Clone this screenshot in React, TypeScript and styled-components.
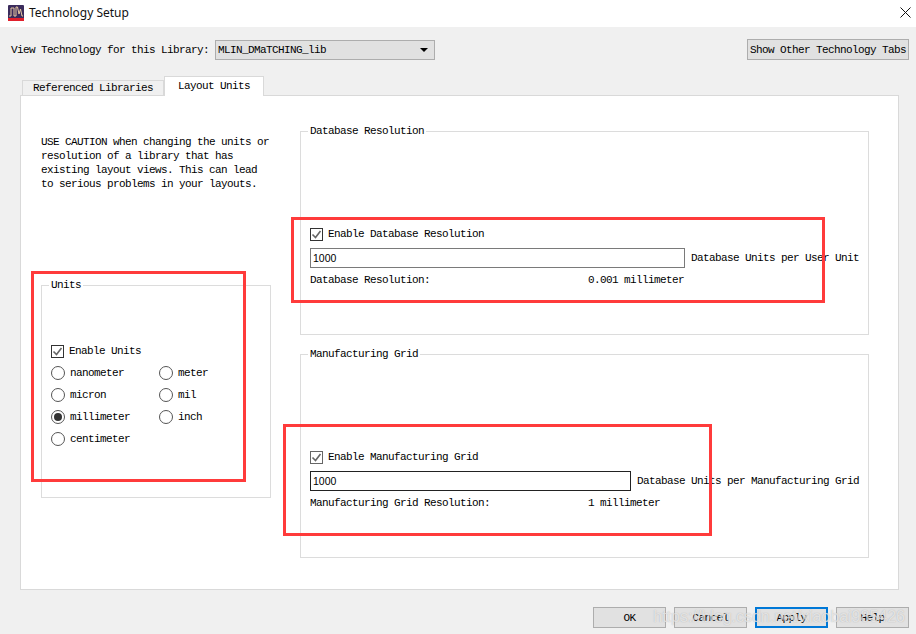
import * as React from "react";
import styled, {createGlobalStyle} from "styled-components";

const GlobalStyle = createGlobalStyle`
  html, body {
    margin: 0;
    padding: 0;
    background: #f0f0f0;
  }
  * {
    box-sizing: border-box;
  }
`;

const monoText = `
  font-family: "Liberation Mono", "DejaVu Sans Mono", monospace;
  font-size: 11px;
  letter-spacing: -0.6px;
  line-height: 14px;
  color: #000;
  white-space: pre;
`;

const AppIcon = () => (
    <svg width="16" height="16" viewBox="0 0 16 16">
        <rect width="16" height="16" rx="1" fill="#3b2c5c"/>
        <rect y="13" width="16" height="3" fill="#e0202c"/>
        <path d="M1 11H3V3H6V11H8V2H9.5L11 9L12.5 4L14 11H15" fill="none" stroke="#e8c9a0" strokeWidth="1"/>
    </svg>
);

const CloseIcon = () => (
    <svg width="11" height="11" viewBox="0 0 11 11">
        <path d="M0.5 0.5L10.5 10.5M10.5 0.5L0.5 10.5" stroke="#111" strokeWidth="1"/>
    </svg>
);

const CheckIcon = () => (
    <svg width="11" height="11" viewBox="0 0 11 11">
        <path d="M1.5 5.5L4.5 8.5L9.5 2" fill="none" stroke="#666" strokeWidth="1.6"/>
    </svg>
);

const CheckRow = ({label, dim}: { label: string; dim?: boolean }) => (
    <Row>
        <CheckBox $dim={dim}><CheckIcon/></CheckBox>
        <Label>{label}</Label>
    </Row>
);

const RadioOption = ({label, checked}: { label: string; checked?: boolean }) => (
    <RadioRow>
        <RadioDot $checked={checked}/>
        <Label>{label}</Label>
    </RadioRow>
);

const units = [
    {label: "nanometer"},
    {label: "meter"},
    {label: "micron"},
    {label: "mil"},
    {label: "millimeter", checked: true},
    {label: "inch"},
    {label: "centimeter"},
];

const App = () => {
    return (
        <Window>
            <GlobalStyle/>
            <TitleBar>
                <AppIcon/>
                <TitleText>Technology Setup</TitleText>
                <CloseSlot><CloseIcon/></CloseSlot>
            </TitleBar>
            <Toolbar>
                <Label>View Technology for this Library:</Label>
                <Select>
                    <Label>MLIN_DMaTCHING_lib</Label>
                    <SelectArrow/>
                </Select>
                <ToolButton>Show Other Technology Tabs</ToolButton>
            </Toolbar>
            <TabStrip>
                <Tab>Referenced Libraries</Tab>
                <Tab $active>Layout Units</Tab>
            </TabStrip>
            <Panel>
                <LeftColumn>
                    <Caution>{"USE CAUTION when changing the units or\nresolution of a library that has\nexisting layout views. This can lead\nto serious problems in your layouts."}</Caution>
                    <Group $height={219} $top={52} $gap={88}>
                        <GroupLegend>Units</GroupLegend>
                        <CheckRow label="Enable Units"/>
                        <RadioGrid>
                            {units.map((unit) => (
                                <RadioOption key={unit.label} label={unit.label} checked={unit.checked}/>
                            ))}
                        </RadioGrid>
                    </Group>
                </LeftColumn>
                <RightColumn>
                    <Group $height={210} $top={89}>
                        <GroupLegend>Database Resolution</GroupLegend>
                        <CheckRow label="Enable Database Resolution"/>
                        <InputRow>
                            <ValueInput>1000</ValueInput>
                            <Label>Database Units per User Unit</Label>
                        </InputRow>
                        <ResultRow>
                            <Label>Database Resolution:</Label>
                            <Label>0.001 millimeter</Label>
                        </ResultRow>
                    </Group>
                    <Group $height={210} $top={89}>
                        <GroupLegend>Manufacturing Grid</GroupLegend>
                        <CheckRow label="Enable Manufacturing Grid" dim/>
                        <InputRow>
                            <ValueInput $focused>1000</ValueInput>
                            <Label>Database Units per Manufacturing Grid</Label>
                        </InputRow>
                        <ResultRow>
                            <Label>Manufacturing Grid Resolution:</Label>
                            <Label>1 millimeter</Label>
                        </ResultRow>
                    </Group>
                </RightColumn>
            </Panel>
            <Footer>
                <FooterButton>OK</FooterButton>
                <FooterButton>Cancel</FooterButton>
                <FooterButton $primary>Apply</FooterButton>
                <FooterButton>Help</FooterButton>
            </Footer>
            <Highlight $x={31} $y={271} $w={215} $h={211}/>
            <Highlight $x={291} $y={217} $w={534} $h={86}/>
            <Highlight $x={283} $y={424} $w={429} $h={112}/>
            <Watermark>https://blog.csdn.net/xiaobai985426</Watermark>
        </Window>
    );
};

export default App;

const Window = styled.div`
  position: relative;
  width: 916px;
  height: 634px;
  overflow: hidden;
  display: flex;
  flex-direction: column;
  background: #f0f0f0;
`;

const TitleBar = styled.div`
  height: 27px;
  flex: none;
  display: flex;
  align-items: center;
  padding: 0 5px 2px 8px;
  background: #fff;
`;

const TitleText = styled.span`
  margin-left: 5px;
  font-family: "Noto Sans", "Open Sans", sans-serif;
  font-size: 12px;
  line-height: 16px;
  color: #111;
`;

const CloseSlot = styled.span`
  display: flex;
  margin-left: auto;
`;

const Toolbar = styled.div`
  height: 21px;
  flex: none;
  margin-top: 12px;
  padding: 0 7px 0 11px;
  display: flex;
  align-items: center;
`;

const Label = styled.span`
  ${monoText}
`;

const Select = styled.div`
  width: 220px;
  height: 20px;
  margin-left: 6px;
  padding: 0 6px 0 2px;
  display: flex;
  align-items: center;
  justify-content: space-between;
  background: #e1e1e1;
  border: 1px solid #adadad;
`;

const SelectArrow = styled.span`
  width: 0;
  height: 0;
  border-left: 4px solid transparent;
  border-right: 4px solid transparent;
  border-top: 4px solid #000;
`;

const ToolButton = styled.div`
  ${monoText}
  height: 21px;
  width: 162px;
  margin-left: auto;
  display: flex;
  align-items: center;
  justify-content: center;
  background: #e1e1e1;
  border: 1px solid #adadad;
`;

const TabStrip = styled.div`
  height: 20px;
  flex: none;
  margin: 16px 0 -1px;
  padding-left: 22px;
  display: flex;
  align-items: flex-end;
`;

const Tab = styled.div<{ $active?: boolean }>`
  ${monoText}
  position: relative;
  z-index: 1;
  height: ${(p) => (p.$active ? "20px" : "16px")};
  padding: ${(p) => (p.$active ? "2px 13px 0" : "0 10px")};
  margin-left: ${(p) => (p.$active ? "0" : "0")};
  background: ${(p) => (p.$active ? "#fff" : "#f0f0f0")};
  border: 1px solid #d9d9d9;
  border-bottom: ${(p) => (p.$active ? "none" : "1px solid #d9d9d9")};
`;

const Panel = styled.div`
  height: 495px;
  flex: none;
  margin: 0 17px 0 20px;
  padding: 29px 0 0 20px;
  display: grid;
  grid-template-columns: 230px 569px;
  column-gap: 29px;
  align-items: start;
  background: #fff;
  border: 1px solid #d9d9d9;
`;

const LeftColumn = styled.div`
  display: flex;
  flex-direction: column;
`;

const RightColumn = styled.div`
  display: flex;
  flex-direction: column;
  gap: 13px;
`;

const Caution = styled.div`
  ${monoText}
  margin-top: 10px;
`;

const Group = styled.fieldset<{ $height: number; $top: number; $gap?: number }>`
  margin: ${(p) => p.$gap ?? 0}px 0 0;
  min-width: 0;
  height: ${(p) => p.$height}px;
  padding: ${(p) => p.$top}px 9px 0;
  border: 1px solid #dcdcdc;
`;

const GroupLegend = styled.legend`
  ${monoText}
  line-height: 13px;
  margin-left: -2px;
  padding: 0 2px;
`;

const Row = styled.div`
  height: 14px;
  display: flex;
  align-items: center;
  gap: 5px;
`;

const CheckBox = styled.span<{ $dim?: boolean }>`
  width: 13px;
  height: 13px;
  flex: none;
  display: flex;
  align-items: center;
  justify-content: center;
  background: #fff;
  border: 1px solid ${(p) => (p.$dim ? "#666" : "#333")};
`;

const RadioGrid = styled.div`
  margin-top: 4px;
  display: grid;
  grid-template-columns: 108px 1fr;
  grid-auto-rows: 22px;
`;

const RadioRow = styled.div`
  display: flex;
  align-items: center;
  gap: 5px;
`;

const RadioDot = styled.span<{ $checked?: boolean }>`
  width: 14px;
  height: 14px;
  flex: none;
  display: flex;
  align-items: center;
  justify-content: center;
  border: 1px solid #555;
  border-radius: 50%;
  background: #fff;

  &::before {
    content: "";
    display: ${(p) => (p.$checked ? "block" : "none")};
    width: 8px;
    height: 8px;
    border-radius: 50%;
    background: #333;
  }
`;

const InputRow = styled.div`
  margin-top: 7px;
  display: flex;
  align-items: center;
  gap: 6px;
`;

const ValueInput = styled.div<{ $focused?: boolean }>`
  flex: 1;
  height: 20px;
  padding-left: 2px;
  font-family: "Liberation Sans", Arial, sans-serif;
  font-size: 10.5px;
  line-height: 18px;
  color: #000;
  background: #fff;
  border: 1px solid ${(p) => (p.$focused ? "#222" : "#7a7a7a")};
`;

const ResultRow = styled.div`
  margin-top: 5px;
  display: grid;
  grid-template-columns: 278px 1fr;
`;

const Footer = styled.div`
  flex: none;
  padding: 17px 7px 6px;
  display: flex;
  justify-content: flex-end;
  gap: 8px;
`;

const FooterButton = styled.div<{ $primary?: boolean }>`
  ${monoText}
  width: 73px;
  height: 21px;
  display: flex;
  align-items: center;
  justify-content: center;
  background: #e1e1e1;
  border: ${(p) => (p.$primary ? "2px solid #0078d7" : "1px solid #adadad")};
`;

const Highlight = styled.div<{ $x: number; $y: number; $w: number; $h: number }>`
  position: absolute;
  left: ${(p) => p.$x}px;
  top: ${(p) => p.$y}px;
  width: ${(p) => p.$w}px;
  height: ${(p) => p.$h}px;
  border: 3px solid #ff3b3b;
  pointer-events: none;
`;

const Watermark = styled.div`
  position: absolute;
  right: 11px;
  bottom: 8px;
  font-family: "Liberation Sans", Arial, sans-serif;
  font-size: 16px;
  line-height: 18px;
  color: rgba(255, 255, 255, 0.65);
  text-shadow: 0 0 1px rgba(120, 120, 120, 0.55);
  white-space: nowrap;
`;
